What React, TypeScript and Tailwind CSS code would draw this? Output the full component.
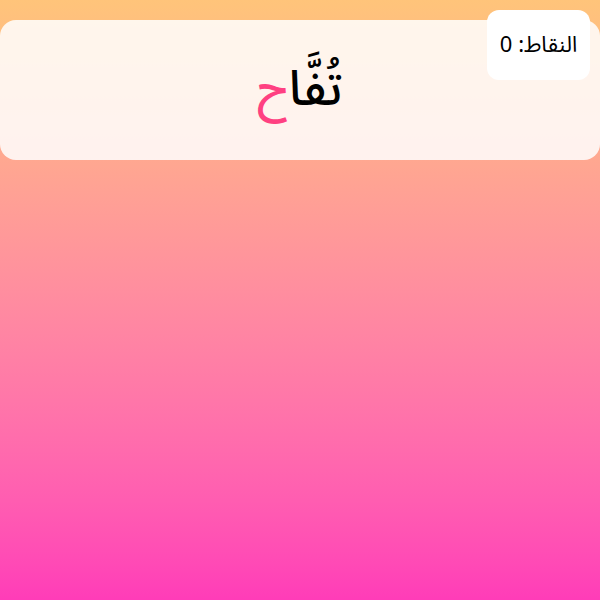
import React from "react";

export default function App() {
  return (
    <div
      dir="rtl"
      className="relative w-[600px] h-[600px] overflow-hidden bg-gradient-to-b from-[#ffc47a] to-[#ff3cb8]"
      style={{ fontFamily: '"Noto Sans Arabic", Roboto, sans-serif' }}
    >
      <div className="pt-5">
        <div className="h-[140px] rounded-2xl bg-white/85 flex items-center justify-center">
          <div className="text-[48px] leading-none text-black font-medium">
            تُفَّا<span className="text-[#ff4081]">ح</span>
          </div>
        </div>
      </div>
      <div className="absolute top-[10px] right-[10px] w-[103px] h-[70px] rounded-xl bg-white flex items-center justify-center text-[22px] text-black">
        النقاط: 0
      </div>
    </div>
  );
}
